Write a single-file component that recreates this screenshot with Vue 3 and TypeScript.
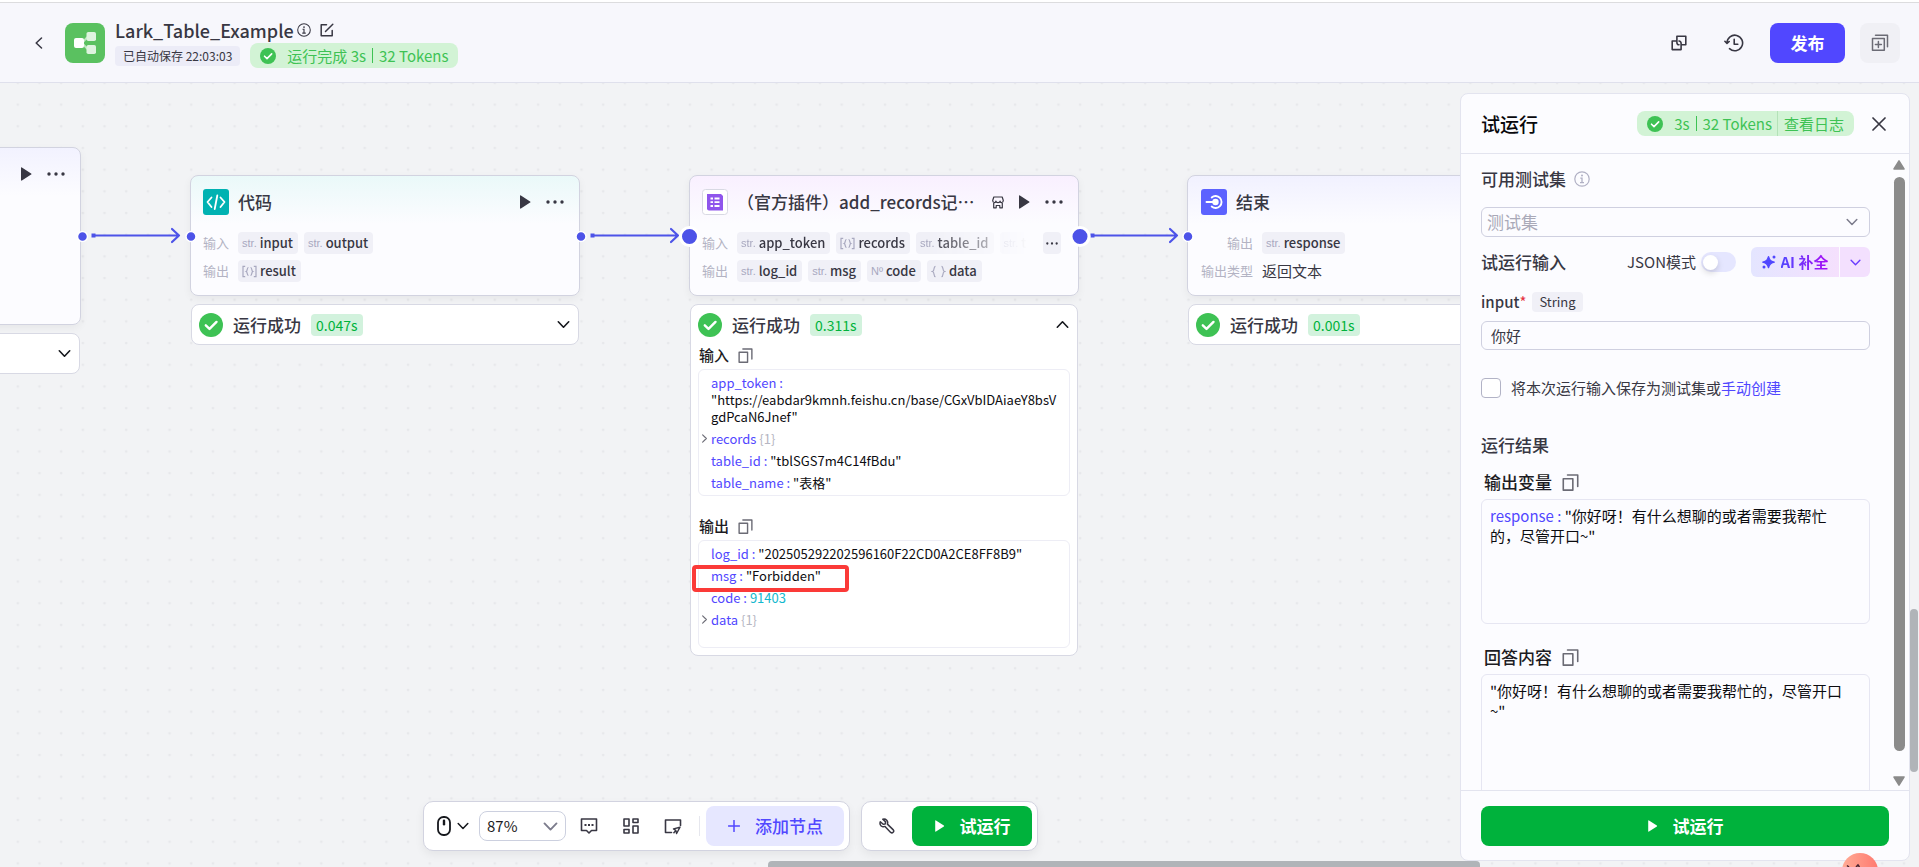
<script setup lang="ts">
import { ref } from 'vue'

type Kind = 'str' | 'arr' | 'num' | 'obj'
interface Param { kind: Kind; name: string }

const codeInputs: Param[] = [
  { kind: 'str', name: 'input' },
  { kind: 'str', name: 'output' },
]
const codeOutputs: Param[] = [{ kind: 'arr', name: 'result' }]
const pluginInputs: Param[] = [
  { kind: 'str', name: 'app_token' },
  { kind: 'arr', name: 'records' },
  { kind: 'str', name: 'table_id' },
  { kind: 'str', name: 'table_name' },
]
const pluginOutputs: Param[] = [
  { kind: 'str', name: 'log_id' },
  { kind: 'str', name: 'msg' },
  { kind: 'num', name: 'code' },
  { kind: 'obj', name: 'data' },
]
const codeRows = [
  { label: '输入', params: codeInputs },
  { label: '输出', params: codeOutputs },
]

const testInput = ref('你好')
const jsonMode = ref(false)
const saveAsSet = ref(false)
</script>

<template>
  <div class="app">
    <svg class="defs" aria-hidden="true">
      <symbol id="i-play" viewBox="0 0 12 14"><path d="M1 1v12c0 .6.5.8.9.5l9.200-5.900c.5-.3.5-.9 0-1.200L1.900.5C1.500.2 1 .4 1 1z" fill="currentColor" /></symbol>
      <symbol id="i-dots" viewBox="0 0 18 4"><circle cx="2" cy="2" r="1.700" fill="currentColor" /><circle cx="9" cy="2" r="1.700" fill="currentColor" /><circle cx="16" cy="2" r="1.700" fill="currentColor" /></symbol>
      <symbol id="i-check" viewBox="0 0 24 24"><circle cx="12" cy="12" r="12" fill="#3ec254" /><path d="M6.800 12.300l3.700 3.600 7-7" fill="none" stroke="#fff" stroke-width="2.400" stroke-linecap="round" stroke-linejoin="round" /></symbol>
      <symbol id="i-down" viewBox="0 0 12 12"><path d="M1.200 3.500L6 8.500l4.800-5" fill="none" stroke="currentColor" stroke-width="1.500" stroke-linecap="round" stroke-linejoin="round" /></symbol>
      <symbol id="i-copy" viewBox="0 0 16 16"><path d="M1.200 4.500h9v10.700h-9z" fill="none" stroke="currentColor" stroke-width="1.500" stroke-linejoin="round" /><path d="M5.200 1h9.600v10.800" fill="none" stroke="currentColor" stroke-width="1.500" stroke-linecap="round" stroke-linejoin="round" /></symbol>
      <symbol id="i-info" viewBox="0 0 16 16"><circle cx="8" cy="8" r="7.200" fill="none" stroke="currentColor" stroke-width="1.200" /><circle cx="8" cy="4.600" r="1" fill="currentColor" /><path d="M6.300 7.200H8v4.300M6 11.600h4" fill="none" stroke="currentColor" stroke-width="1.300" /></symbol>
      <symbol id="i-arr" viewBox="0 0 15 12"><path d="M3.200.8H1v10.400h2.200M11.800.8H14v10.400h-2.200M6.500 2C4.800 2 5.700 5.400 4.200 6c1.500.6.6 4 2.300 4M8.500 2c1.700 0 .8 3.400 2.300 4-1.500.6-.6 4-2.300 4" fill="none" stroke="currentColor" stroke-width="1.200" /></symbol>
      <symbol id="i-obj" viewBox="0 0 15 12"><path d="M4.500.8C2 .8 4.200 5.200 1.500 6c2.700.8.5 5.200 3 5.200M10.500.8c2.500 0 .3 4.400 3 5.200-2.700.8-.5 5.200-3 5.200" fill="none" stroke="currentColor" stroke-width="1.200" /></symbol>
    </svg>

    <header class="topbar">
      <button class="plain back" aria-label="返回">
        <svg width="8" height="12" viewBox="0 0 8 12"><path d="M6.500 1L1.200 6l5.300 5" fill="none" stroke="currentColor" stroke-width="1.500" stroke-linecap="round" stroke-linejoin="round" /></svg>
      </button>
      <svg class="logo" width="40" height="40" viewBox="0 0 40 40">
        <rect width="40" height="40" rx="8" fill="#5ac160" />
        <path d="M17 20l5-5.500h3M17 20l5 5.500h3" stroke="#fff" stroke-opacity=".6" stroke-width="2" fill="none" />
        <rect x="21.500" y="9" width="9.500" height="9" rx="1.800" fill="#def3df" />
        <rect x="21.500" y="22" width="9.500" height="9" rx="1.800" fill="#def3df" />
        <rect x="9" y="15" width="10" height="10" rx="2" fill="#fff" />
      </svg>
      <div class="titles">
        <div class="title-row">
          <h1>Lark_Table_Example</h1>
          <svg width="14" height="14"><use href="#i-info" /></svg>
          <svg class="edit" width="14" height="14" viewBox="0 0 14 14"><path d="M6.500 1.700H1.200v11.100h11V7.500M5.500 8.500L12.800 1.200" fill="none" stroke="currentColor" stroke-width="1.500" stroke-linecap="round" stroke-linejoin="round" /></svg>
        </div>
        <div class="title-row">
          <span class="saved">已自动保存 22:03:03</span>
          <span class="result-chip">
            <svg width="16" height="16"><use href="#i-check" /></svg>
            <span class="result-text"><span>运行完成 3s</span><i class="bar"></i><span>32 Tokens</span></span>
          </span>
        </div>
      </div>
      <div class="top-actions">
        <button class="plain icon-btn" aria-label="创建副本">
          <svg width="16" height="16" viewBox="0 0 16 16"><path d="M10.300 9.700h4.500V1.300H5.900v6.100c0 1.300.8 2.300 2.100 2.300M5.600 6H1.200v8.600h8.900V8.300C10.100 7 9.300 6 8 6" fill="none" stroke="currentColor" stroke-width="1.600" stroke-linejoin="round" stroke-linecap="round" /></svg>
        </button>
        <button class="plain icon-btn" aria-label="历史版本">
          <svg width="20" height="18" viewBox="0 0 20 18"><path d="M3 9a7.800 7.800 0 1 1 2.500 5.700M.9 7.300L3 9.500l2.200-2M10.200 5.200v5h3.600" fill="none" stroke="currentColor" stroke-width="1.600" stroke-linejoin="round" stroke-linecap="round" /></svg>
        </button>
        <button class="publish">发布</button>
        <button class="plain add-panel" aria-label="新建面板">
          <svg width="18" height="18" viewBox="0 0 18 18"><path d="M1.500 4.500h11.800v11.800H1.500zM4.500 1.200h12v11.500M7.400 7.400v6M4.400 10.400h6" fill="none" stroke="currentColor" stroke-width="1.500" stroke-linejoin="round" stroke-linecap="round" /></svg>
        </button>
      </div>
    </header>

    <main class="canvas">
      <svg class="grid-dots" width="100%" height="100%" aria-hidden="true">
        <defs>
          <pattern id="dots" width="21.680" height="21.680" x="6.900" y="10.700" patternUnits="userSpaceOnUse"><circle cx="10.900" cy="10.900" r="1.400" fill="#e7e8eb" /></pattern>
        </defs>
        <rect width="100%" height="100%" fill="url(#dots)" />
      </svg>

      <section class="node start">
        <div class="node-head">
          <span class="spacer"></span>
          <button class="plain" aria-label="运行节点"><svg width="12" height="14"><use href="#i-play" /></svg></button>
          <button class="plain more" aria-label="更多"><svg width="18" height="4"><use href="#i-dots" /></svg></button>
        </div>
      </section>
      <section class="status start-status">
        <div class="status-head"><span class="spacer"></span><button class="plain" aria-label="展开"><svg width="13" height="13"><use href="#i-down" /></svg></button></div>
      </section>

      <section class="node code">
        <div class="node-head">
          <svg width="26" height="26" viewBox="0 0 26 26"><rect width="26" height="26" rx="3" fill="#00b2b2" /><path d="M8.500 8.500L4.500 13l4 5M17.500 8.500l4 4.500-4 5M14.300 6.500l-2.600 13.500" fill="none" stroke="#fff" stroke-width="1.800" stroke-linecap="round" stroke-linejoin="round" /></svg>
          <h2>代码</h2>
          <button class="plain" aria-label="运行节点"><svg width="12" height="14"><use href="#i-play" /></svg></button>
          <button class="plain more" aria-label="更多"><svg width="18" height="4"><use href="#i-dots" /></svg></button>
        </div>
        <div v-for="row in codeRows" :key="row.label" class="row">
          <span class="row-label">{{ row.label }}</span>
          <span v-for="p in row.params" :key="p.name" class="chip">
            <span v-if="p.kind === 'str'" class="kind">str.</span>
            <svg v-else width="15" height="13"><use href="#i-arr" /></svg>
            <span>{{ p.name }}</span>
          </span>
        </div>
      </section>
      <section class="status code-status">
        <div class="status-head">
          <svg width="24" height="24"><use href="#i-check" /></svg>
          <span class="status-text">运行成功</span><span class="time">0.047s</span><span class="spacer"></span>
          <button class="plain" aria-label="展开"><svg width="13" height="13"><use href="#i-down" /></svg></button>
        </div>
      </section>

      <section class="node plugin">
        <div class="node-head">
          <svg width="26" height="26" viewBox="0 0 26 26"><rect x=".5" y=".5" width="25" height="25" rx="3" fill="#fff" stroke="#d8d9e3" /><path d="M5 5h14l2 2v14.500H7a2 2 0 0 1-2-2z" fill="#8f55ec" /><path d="M8.500 9.500H11M8.500 13.200H11M8.500 17H11M12.500 9.500h5M12.500 13.200h5M12.500 17h5" stroke="#fff" stroke-width="1.800" /></svg>
          <h2>（官方插件）add_records记…</h2>
          <svg class="shop" width="12" height="13" viewBox="0 0 12 13"><path d="M1.800 1h8.400l1.100 3.500c0 2.600-3 2.600-3.200.6-.2 2-4 2-4.200 0C3.700 7.100.7 7.100.7 4.500zM1.700 7v4.800h2.500V9.500h3.600v2.300h2.500V7" fill="none" stroke="currentColor" stroke-width="1.200" stroke-linejoin="round" /></svg>
          <button class="plain" aria-label="运行节点"><svg width="12" height="14"><use href="#i-play" /></svg></button>
          <button class="plain more" aria-label="更多"><svg width="18" height="4"><use href="#i-dots" /></svg></button>
        </div>
        <div class="row">
          <span class="row-label">输入</span>
          <span class="chips-fade">
            <span v-for="p in pluginInputs" :key="p.name" class="chip">
              <span v-if="p.kind === 'str'" class="kind">str.</span>
              <svg v-else width="15" height="13"><use href="#i-arr" /></svg>
              <span>{{ p.name }}</span>
            </span>
          </span>
          <button class="plain chip-more" aria-label="更多参数"><svg width="12" height="3"><use href="#i-dots" /></svg></button>
        </div>
        <div class="row">
          <span class="row-label">输出</span>
          <span v-for="p in pluginOutputs" :key="p.name" class="chip">
            <span v-if="p.kind === 'str'" class="kind">str.</span>
            <span v-else-if="p.kind === 'num'" class="kind">Nº</span>
            <svg v-else width="15" height="13"><use href="#i-obj" /></svg>
            <span>{{ p.name }}</span>
          </span>
        </div>
      </section>
      <section class="status plugin-status">
        <div class="status-head">
          <svg width="24" height="24"><use href="#i-check" /></svg>
          <span class="status-text">运行成功</span><span class="time">0.311s</span><span class="spacer"></span>
          <button class="plain flip" aria-label="收起"><svg width="13" height="13"><use href="#i-down" /></svg></button>
        </div>
        <div class="log-title">输入<button class="plain" aria-label="复制输入"><svg width="15" height="15"><use href="#i-copy" /></svg></button></div>
        <div class="log first-log">
          <div class="entry"><span class="key">app_token : </span><span class="long">"https://eabdar9kmnh.feishu.cn/base/CGxVbIDAiaeY8bsVgdPcaN6Jnef"</span></div>
          <div class="entry"><svg class="caret" width="9" height="9"><use href="#i-down" /></svg><span class="key">records</span> <span class="count">{1}</span></div>
          <div class="entry"><span class="key">table_id : </span>"tblSGS7m4C14fBdu"</div>
          <div class="entry"><span class="key">table_name : </span>"表格"</div>
        </div>
        <div class="log-title">输出<button class="plain" aria-label="复制输出"><svg width="15" height="15"><use href="#i-copy" /></svg></button></div>
        <div class="log second-log">
          <div class="entry"><span class="key">log_id : </span>"202505292202596160F22CD0A2CE8FF8B9"</div>
          <div class="entry"><span class="key">msg : </span>"Forbidden"</div>
          <div class="entry"><span class="key">code : </span><span class="number">91403</span></div>
          <div class="entry"><svg class="caret" width="9" height="9"><use href="#i-down" /></svg><span class="key">data</span> <span class="count">{1}</span></div>
        </div>
        <div class="mark"></div>
      </section>

      <section class="node end">
        <div class="node-head">
          <svg width="26" height="26" viewBox="0 0 26 26"><rect width="26" height="26" rx="3" fill="#5c62ff" /><circle cx="14.500" cy="13" r="3.200" fill="#fff" /><path d="M5.500 13h8M10.700 8.400a6 6 0 1 1 0 9.200" fill="none" stroke="#fff" stroke-width="1.900" stroke-linecap="round" /></svg>
          <h2>结束</h2>
        </div>
        <div class="row">
          <span class="row-label">输出</span>
          <span class="chip"><span class="kind">str.</span><span>response</span></span>
        </div>
        <div class="row">
          <span class="row-label">输出类型</span>
          <span class="type">返回文本</span>
        </div>
      </section>
      <section class="status end-status">
        <div class="status-head">
          <svg width="24" height="24"><use href="#i-check" /></svg>
          <span class="status-text">运行成功</span><span class="time">0.001s</span>
        </div>
      </section>

      <svg class="edges" width="1240" height="40" viewBox="0 0 1240 40" aria-hidden="true">
        <g fill="none" stroke="#4d53e8" stroke-width="2.200" stroke-linejoin="round" stroke-linecap="round">
          <path d="M94 19.500H179M172 13l7 6.500-7 6.500" />
          <path d="M592 19.500H678M671 13l7 6.500-7 6.500" />
          <path d="M1092 19.500H1177M1170 13l7 6.500-7 6.500" />
        </g>
        <g fill="#4d53e8"><path d="M91.500 17.500h4v4h-4zM590.500 17.500h4v4h-4zM1090.500 17.500h4v4h-4z" /></g>
        <g fill="#4d53e8" stroke="#fff">
          <circle cx="82.500" cy="20.500" r="5" stroke-width="1.500" />
          <circle cx="191" cy="20.500" r="5" stroke-width="1.500" />
          <circle cx="581" cy="20.500" r="5" stroke-width="1.500" />
          <circle cx="1188" cy="20.500" r="5" stroke-width="1.500" />
          <circle cx="689.500" cy="20.500" r="9" stroke-width="3" />
          <circle cx="1080" cy="20.500" r="9" stroke-width="3" />
        </g>
      </svg>

      <div class="toolbar">
        <div class="tool-group">
          <button class="plain mouse" aria-label="鼠标模式">
            <svg width="14" height="20" viewBox="0 0 14 20"><rect x="1" y="1" width="12" height="18" rx="5.500" fill="none" stroke="#16181d" stroke-width="1.800" /><rect x="5.800" y="3.500" width="2.400" height="6" rx="1.200" fill="#16181d" /></svg>
            <svg width="12" height="12"><use href="#i-down" /></svg>
          </button>
          <div class="zoom-box">
            <select aria-label="缩放比例"><option>87%</option></select>
            <svg width="15" height="15"><use href="#i-down" /></svg>
          </div>
          <button class="plain tool" aria-label="注释">
            <svg width="18" height="18" viewBox="0 0 18 18"><path d="M1.500 2h15v11.500H11.500L9 16 6.500 13.500h-5z" fill="none" stroke="currentColor" stroke-width="1.600" stroke-linejoin="round" /><path d="M4.500 7h2v2h-2zM8 7h2v2H8zM11.500 7h2v2h-2z" fill="currentColor" /></svg>
          </button>
          <button class="plain tool" aria-label="整理布局">
            <svg width="18" height="18" viewBox="0 0 18 18"><path d="M2 2h5v7H2zM11 2h5v3.500h-5zM2 12.500h5V16H2zM11 9h5v7h-5z" fill="none" stroke="currentColor" stroke-width="1.600" stroke-linejoin="round" /></svg>
          </button>
          <button class="plain tool" aria-label="画布定位">
            <svg width="18" height="18" viewBox="0 0 18 18"><path d="M7.500 15.500H1.500V3h15v5.500" fill="none" stroke="currentColor" stroke-width="1.600" stroke-linejoin="round" stroke-linecap="round" /><path d="M16 10.200l-6.500 1.700 2.300 1.500.8 3.100zM11.800 13.400l-2.300 2.800" fill="none" stroke="currentColor" stroke-width="1.400" stroke-linejoin="round" /></svg>
          </button>
          <i class="divider"></i>
          <button class="add-node">
            <svg width="12" height="12" viewBox="0 0 12 12"><path d="M6 .5v11M.5 6h11" stroke="currentColor" stroke-width="1.500" stroke-linecap="round" /></svg>
            添加节点
          </button>
        </div>
        <div class="tool-group">
          <button class="plain wrench" aria-label="调试">
            <svg width="16" height="16" viewBox="0 0 16 16"><path d="M3.800 1.200l2.800 2.700-.4 2-2 .4L1.300 3.700C.5 5.900 1.500 8 3.400 8.600c.9.300 1.800.2 2.600-.2l5.700 6c1.700 1.400 3.900-.8 2.600-2.500L8.400 6.100C9.500 3 7 .4 3.800 1.200z" fill="none" stroke="currentColor" stroke-width="1.500" stroke-linejoin="round" /></svg>
          </button>
          <button class="run small"><svg width="11" height="12"><use href="#i-play" /></svg>试运行</button>
        </div>
      </div>
      <i class="h-thumb"></i>
      <i class="v-thumb"></i>

      <aside class="panel">
        <header class="panel-head">
          <h2>试运行</h2>
          <div class="result-chip">
            <svg width="16" height="16"><use href="#i-check" /></svg>
            <span class="result-text"><span>3s</span><i class="bar"></i><span>32 Tokens</span></span>
            <a href="#log">查看日志</a>
          </div>
          <button class="plain close" aria-label="关闭"><svg width="14" height="14" viewBox="0 0 14 14"><path d="M1 1l12 12M13 1L1 13" stroke="currentColor" stroke-width="1.700" stroke-linecap="round" /></svg></button>
        </header>
        <div class="panel-body">
          <div class="form">
            <label class="label" for="test-set">可用测试集<svg width="16" height="16"><use href="#i-info" /></svg></label>
            <div class="select-box">
              <select id="test-set"><option>测试集</option></select>
              <svg width="12" height="12"><use href="#i-down" /></svg>
            </div>
            <div class="mode-row">
              <h3>试运行输入</h3>
              <label class="json" for="json-mode">JSON模式</label>
              <input id="json-mode" v-model="jsonMode" class="switch" type="checkbox" role="switch" />
              <div class="ai">
                <button class="ai-main">
                  <svg width="14" height="14" viewBox="0 0 14 14"><path d="M6.500 1.800c.8 3 1.700 4.200 5.700 5.400-4 1.200-4.900 2.400-5.700 5.400C5.700 9.600 4.800 8.400.8 7.200c4-1.200 4.900-2.400 5.700-5.400z" fill="#5147ff" stroke="#5147ff" stroke-width="1.400" stroke-linejoin="round" /><circle cx="12" cy="2" r="1.500" fill="#5147ff" /><circle cx="2" cy="12" r="1.500" fill="#5147ff" /></svg>
                  <span>AI 补全</span>
                </button>
                <button class="ai-more" aria-label="更多补全"><svg width="11" height="11"><use href="#i-down" /></svg></button>
              </div>
            </div>
            <div class="field-label"><label for="test-input">input<b>*</b></label><span class="type-tag">String</span></div>
            <input id="test-input" v-model="testInput" class="text" type="text" />
            <div class="save-row">
              <input id="save-set" v-model="saveAsSet" class="tick" type="checkbox" />
              <span><label for="save-set">将本次运行输入保存为测试集或</label><a href="#create">手动创建</a></span>
            </div>
            <h3 class="results">运行结果</h3>
            <div class="out-title">输出变量<button class="plain" aria-label="复制输出变量"><svg width="17" height="17"><use href="#i-copy" /></svg></button></div>
            <div class="out"><span class="key">response : </span>"你好呀！有什么想聊的或者需要我帮忙的，尽管开口~"</div>
            <div class="out-title second">回答内容<button class="plain" aria-label="复制回答内容"><svg width="17" height="17"><use href="#i-copy" /></svg></button></div>
            <div class="out">"你好呀！有什么想聊的或者需要我帮忙的，尽管开口~"</div>
          </div>
          <div class="scroll" aria-hidden="true">
            <svg width="12" height="10" viewBox="0 0 12 10"><path d="M6 .8L11 9H1z" fill="#8b8b8b" stroke="#8b8b8b" stroke-width="1.500" stroke-linejoin="round" /></svg>
            <i></i>
            <svg width="12" height="10" viewBox="0 0 12 10"><path d="M6 9.200L11 1H1z" fill="#8b8b8b" stroke="#8b8b8b" stroke-width="1.500" stroke-linejoin="round" /></svg>
          </div>
        </div>
        <footer class="panel-foot">
          <button class="run"><svg width="11" height="12"><use href="#i-play" /></svg>试运行</button>
        </footer>
      </aside>

      <svg class="mascot" width="36" height="14" viewBox="0 0 36 14" aria-hidden="true">
        <defs><linearGradient id="skin" x1="0" y1="0" x2="1" y2="0"><stop offset="0" stop-color="#ffac96" /><stop offset="1" stop-color="#ff7a70" /></linearGradient></defs>
        <circle cx="18" cy="18" r="18" fill="url(#skin)" />
        <path d="M5 12.500l2 1.500M14 14l2-2 1.500 2" fill="none" stroke="#4a2530" stroke-width="1.500" />
      </svg>
    </main>
  </div>
</template>

<style>
body { margin: 0; background: #f2f3f5; }
</style>

<style scoped>
* { box-sizing: border-box; }
.app {
  display: flex;
  flex-direction: column;
  height: 100vh;
  overflow: hidden;
  color: #383743;
  font-family: "Noto Sans CJK SC", "Noto Sans", sans-serif;
  font-size: 15px;
  line-height: 20px;
}
.defs { position: absolute; width: 0; height: 0; }
svg { flex: none; display: block; }
h1, h2, h3 { margin: 0; font-weight: 500; }
i { display: block; }
a { text-decoration: none; }
button, input, select { font: inherit; color: inherit; margin: 0; }
button { border: 0; cursor: pointer; }
.plain { display: flex; align-items: center; padding: 0; background: none; }
.spacer { flex: 1; }
.key { color: #5147ff; }

/* Top bar */
.topbar {
  display: flex;
  align-items: center;
  flex: none;
  height: 83px;
  padding: 4px 19px 0 35px;
  border-bottom: 1px solid #dfe0ec;
  background: #f7f7fc;
  box-shadow: inset 0 2px #fff, inset 0 3px #dcdcde;
}
.logo { margin-left: 22px; }
.titles { display: flex; flex-direction: column; gap: 1px; margin-left: 10px; }
.title-row { display: flex; align-items: center; }
.title-row h1 { font-size: 18px; line-height: 24px; margin-right: 3px; }
.edit { margin-left: 9px; }
.saved {
  padding: 0 8px;
  border-radius: 4px;
  background: #ececf7;
  font-size: 12px;
  line-height: 20px;
  margin-right: 10px;
}
.result-chip {
  display: flex;
  align-items: center;
  height: 25px;
  padding: 0 10px;
  border-radius: 8px;
  background: #d2f3d5;
  color: #3ec254;
  line-height: 25px;
}
.result-text { display: flex; align-items: center; margin-left: 11px; }
.bar { width: 1px; height: 15px; margin: 0 6px; background: #3ec254; }
.result-chip a { margin-left: 5px; padding-left: 6px; border-left: 1px solid #b4e2b8; color: inherit; }
.top-actions { display: flex; align-items: center; margin-left: auto; }
.icon-btn { justify-content: center; width: 36px; height: 40px; margin-right: 19px; }
.icon-btn + .publish { margin-left: -1px; }
.publish { width: 75px; height: 40px; padding: 0; border-radius: 8px; background: #5147ff; color: #fff; font-size: 17px; font-weight: 700; }
.add-panel { justify-content: center; width: 40px; height: 40px; margin-left: 15px; border-radius: 8px; background: #f0f0f5; color: #6b6b75; }

/* Canvas */
.canvas { position: relative; flex: 1; min-height: 0; overflow: hidden; background: #f2f3f5; }
.grid-dots { position: absolute; inset: 0; }
.edges { position: absolute; left: 0; top: 133px; pointer-events: none; }
.node {
  position: absolute;
  display: flex;
  flex-direction: column;
  gap: 6px;
  width: 390px;
  height: 121px;
  padding: 12px;
  border: 1px solid #d2d3e0;
  border-radius: 8px;
  background: #fcfcff;
  box-shadow: 0 3px 8px rgba(0, 0, 0, 0.05);
}
.start { left: -309px; top: 64px; height: 178px; background: linear-gradient(#f2f2ff, #fcfcff 48px); }
.code { left: 190px; top: 92px; background: linear-gradient(#eaf9f9, #fcfcff 48px); }
.plugin { left: 689px; top: 92px; background: linear-gradient(#f9f0ff, #fcfcff 48px); }
.end { left: 1187px; top: 92px; padding-left: 13px; background: linear-gradient(#f1f1ff, #fcfcff 48px); }
.node-head { display: flex; align-items: center; height: 28px; margin-bottom: 10px; padding-right: 3px; }
.node-head h2 { flex: 1; min-width: 0; margin-left: 9px; overflow: hidden; font-size: 17px; line-height: 26px; white-space: nowrap; text-overflow: ellipsis; }
.more { margin-left: 15px; }
.shop { margin: 0 14px 0 12px; }
.row { display: flex; align-items: center; gap: 6px; height: 22px; }
.row-label { flex: none; margin-right: 3px; color: #b3b3c3; font-size: 13px; text-align: right; }
.end .row-label { width: 52px; }
.chip {
  display: flex;
  align-items: center;
  gap: 3px;
  flex: none;
  height: 22px;
  padding: 0 5px 0 4px;
  border-radius: 4px;
  background: #f0f0f7;
  font-size: 13px;
  font-weight: 500;
}
.chip svg, .kind { color: #a8a8bf; }
.kind { font-family: "Liberation Sans", "Noto Sans CJK SC", sans-serif; font-size: 11px; font-weight: 400; }
.chips-fade {
  display: flex;
  gap: 6px;
  flex: 1;
  min-width: 0;
  overflow: hidden;
  mask-image: linear-gradient(90deg, #000 190px, transparent 290px);
}
.chip-more { justify-content: center; width: 18px; height: 22px; margin-right: 5px; border-radius: 4px; background: #f0f0f7; }
.status {
  position: absolute;
  width: 388px;
  padding: 0 7px;
  border: 1px solid #d8d9e4;
  border-radius: 8px;
  background: #fff;
}
.start-status { left: -308px; top: 250px; }
.code-status { left: 191px; top: 221px; }
.plugin-status { left: 690px; top: 221px; padding-bottom: 7px; }
.end-status { left: 1188px; top: 221px; }
.status-head { display: flex; align-items: center; height: 39px; padding-right: 1px; }
.status-head button { color: #16181d; }
.flip svg { transform: rotate(180deg); }
.status-text { margin: 0 10px; font-size: 17px; font-weight: 500; }
.time { padding: 0 5px; border-radius: 4px; background: #d2f2dd; color: #00b23c; font-size: 14px; line-height: 22px; }
.log-title { display: flex; align-items: center; gap: 9px; height: 20px; margin: 1px 1px 4px; color: #1d1c23; font-weight: 500; }
.log-title button { color: #6b6b75; }
.log {
  padding: 2px 8px 1px 12px;
  border: 1px solid #ededf5;
  border-radius: 6px;
  color: #0c0c10;
  font-size: 13px;
  line-height: 17px;
}
.first-log { margin-bottom: 20px; }
.second-log { height: 108px; }
.entry { position: relative; padding: 2px 0 3px; }
.long { display: inline-block; word-break: break-all; }
.number { color: #14b8ce; }
.count { color: #b6b6c2; }
.caret { position: absolute; left: -11px; top: 6px; color: #6b6b75; transform: rotate(-90deg); }
.mark { position: absolute; left: 1px; top: 260px; width: 157px; height: 27px; border: 4px solid #fb3a38; border-radius: 4px; }
.h-thumb { position: absolute; left: 768px; right: 439px; bottom: 0; height: 6px; border-radius: 4px 4px 0 0; background: #b0b4b8; }
.v-thumb { position: absolute; right: 1px; top: 526px; width: 8px; height: 163px; border-radius: 4px; background: #b0b4b8; }

/* Bottom toolbar */
.toolbar { position: absolute; left: 423px; bottom: 16px; display: flex; gap: 11px; }
.tool-group {
  display: flex;
  align-items: center;
  height: 50px;
  padding: 0 5px 0 13px;
  border: 1px solid #d2d3e0;
  border-radius: 10px;
  background: #fff;
  box-shadow: 0 4px 10px rgba(0, 0, 0, 0.06);
}
.mouse { gap: 6px; color: #16181d; }
.zoom-box, .select-box { position: relative; }
.zoom-box svg, .select-box svg { position: absolute; pointer-events: none; color: #7c7c8c; }
select { appearance: none; width: 100%; background: transparent; outline: 0; }
.zoom-box { width: 87px; margin: 0 14px 0 10px; color: #1d1c23; }
.zoom-box select { height: 30px; padding: 0 7px; border: 1px solid #ccd0df; border-radius: 8px; }
.zoom-box svg { right: 8px; top: 8px; }
.tool { margin-right: 24px; }
.divider { width: 1px; height: 20px; margin: 0 6px 0 -7px; background: #e6e7ee; }
.add-node {
  display: flex;
  align-items: center;
  gap: 15px;
  height: 40px;
  padding: 0 21px 0 22px;
  border-radius: 8px;
  background: #e6e7ff;
  color: #5147ff;
  font-size: 17px;
  font-weight: 500;
}
.wrench { margin: 0 17px 0 4px; }
.run {
  display: flex;
  align-items: center;
  justify-content: center;
  gap: 15px;
  width: 100%;
  height: 40px;
  padding: 0;
  border-radius: 8px;
  background: #00b23c;
  color: #fff;
  font-size: 17px;
  font-weight: 700;
}
.run.small { width: 120px; }

/* Test run panel */
.panel {
  position: absolute;
  right: 9px;
  top: 10px;
  bottom: 6px;
  display: flex;
  flex-direction: column;
  width: 450px;
  border: 1px solid #e3e4ef;
  border-radius: 8px;
  background: #fcfcff;
}
.panel-head { display: flex; align-items: center; flex: none; height: 60px; padding: 0 23px 0 20px; border-bottom: 1px solid #e3e4ef; }
.panel-head h2 { margin-right: auto; color: #08080c; font-size: 19px; }
.close { margin-left: 18px; }
.panel-body { display: flex; flex: 1; min-height: 0; }
.form { flex: 1; min-width: 0; overflow: hidden; padding: 13px 23px 0 20px; }
.label { display: flex; align-items: center; gap: 8px; font-size: 17px; line-height: 24px; font-weight: 500; }
.label svg { color: #b0b0c4; }
.select-box { margin: 16px 0 10px; }
.select-box select { height: 30px; padding: 0 5px; border: 1px solid #cfd0e0; border-radius: 6px; color: #a9a9b8; font-size: 17px; line-height: 24px; display: block; }
.select-box svg { right: 12px; top: 9px; }
.mode-row { display: flex; align-items: center; height: 30px; }
h3 { font-size: 17px; line-height: 24px; }
.mode-row h3 { margin-right: auto; }
.switch {
  appearance: none;
  display: flex;
  align-items: center;
  width: 35px;
  height: 20px;
  margin: 0 15px 0 5px;
  padding: 0 2px;
  border-radius: 10px;
  background: #e5e6ff;
}
.switch::before { content: ""; width: 15px; height: 15px; border-radius: 50%; background: #fff; box-shadow: 0 3px 6px rgba(0, 0, 0, 0.15); }
.switch:checked { justify-content: flex-end; background: #5147ff; }
.ai { display: flex; gap: 1px; }
.ai button { display: flex; align-items: center; justify-content: center; height: 30px; padding: 0; }
.ai .ai-main { gap: 5px; width: 88px; border-radius: 6px 0 0 6px; background: linear-gradient(90deg, #e4e5ff, #f5e0fd); font-weight: 700; }
.ai-main span { background: linear-gradient(90deg, #5147ff, #a60cf5); background-clip: text; color: transparent; }
.ai .ai-more { width: 30px; border-radius: 0 6px 6px 0; background: #f3e0fe; color: #6a3cff; }
.field-label { display: flex; align-items: center; gap: 6px; margin: 15px 0 9px; font-weight: 500; }
.field-label b { color: #e53241; font-weight: 400; }
.type-tag { padding: 0 7px; border-radius: 4px; background: #f0f0f7; font-size: 13px; font-weight: 400; line-height: 20px; }
.text { display: block; width: 100%; height: 29px; padding: 0 9px; border: 1px solid #cfd0e0; border-radius: 6px; background: transparent; outline: 0; }
.save-row { display: flex; align-items: center; gap: 10px; margin-top: 28px; }
.save-row a { color: #5147ff; }
.tick { appearance: none; width: 20px; height: 20px; border: 1px solid #b2b3c6; border-radius: 4px; background: #fff; }
.results { margin-top: 35px; }
.out-title { display: flex; align-items: center; gap: 10px; margin: 13px 3px 5px; color: #1d1c23; font-size: 17px; line-height: 24px; font-weight: 500; }
.out-title.second { margin-top: 21px; }
.out-title button { color: #6b6b75; }
.out { height: 125px; padding: 6px 30px 6px 8px; border: 1px solid #e6e6f2; border-radius: 6px; color: #0c0c10; }
.out-title.second + .out { padding-right: 20px; }
.scroll { display: flex; flex-direction: column; align-items: center; justify-content: space-between; flex: none; width: 12px; margin-right: 4px; padding: 6px 0 4px; }
.scroll i { flex: 1; width: 11px; margin: 7px 0 25px; border-radius: 6px; background: #8b8b8b; }
.panel-foot { flex: none; padding: 15px 20px 14px; border-top: 1px solid #e3e4ef; }
.mascot { position: absolute; right: 41px; bottom: 0; }
</style>
